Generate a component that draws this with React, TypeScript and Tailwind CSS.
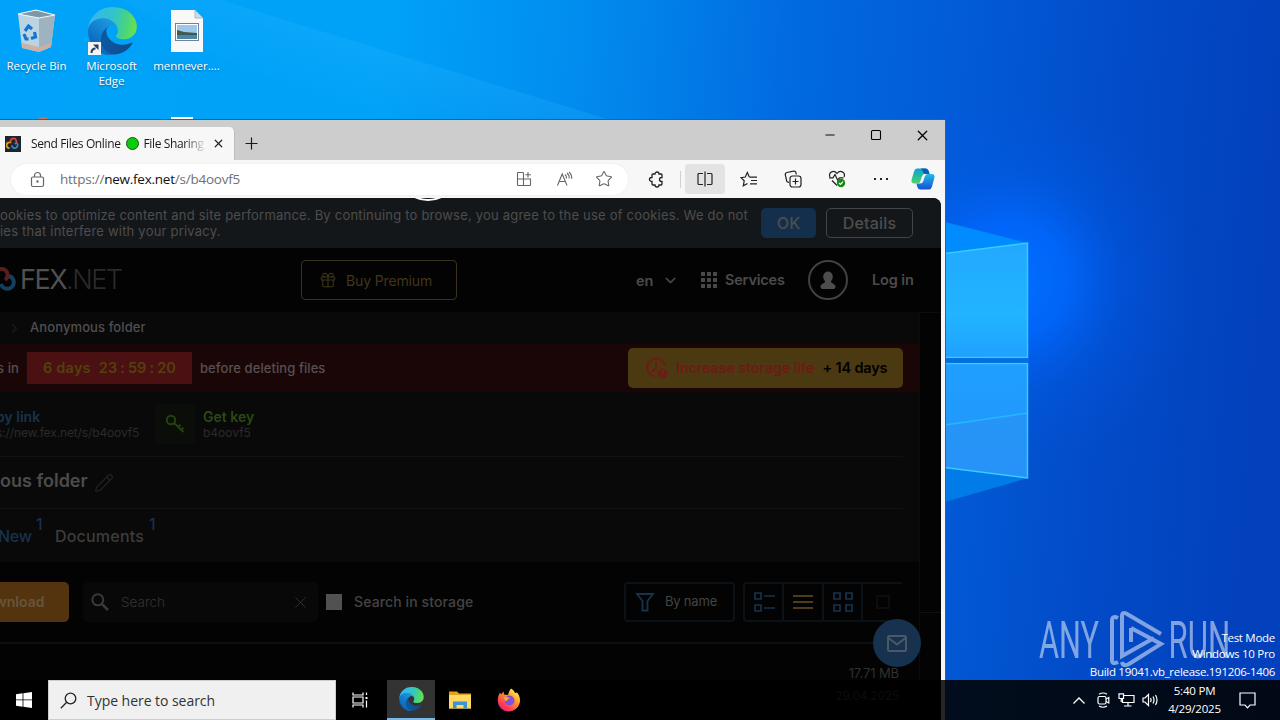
import { ReactNode } from 'react';
import {
  ChevronDown,
  ChevronRight,
  Gift,
  Minus,
  Pencil,
  Plus,
  Square,
  Star,
  X,
} from 'lucide-react';

function EdgeLogo({ id, className }: { id: string; className: string }) {
  return (
    <svg viewBox="0 0 262 256" className={className}>
      <defs>
        <linearGradient id={`${id}-a`} x1="60" y1="177" x2="241" y2="177" gradientUnits="userSpaceOnUse">
          <stop offset="0" stopColor="#0c59a4" />
          <stop offset="1" stopColor="#114a8b" />
        </linearGradient>
        <linearGradient id={`${id}-b`} x1="157" y1="90" x2="46" y2="222" gradientUnits="userSpaceOnUse">
          <stop offset="0" stopColor="#1b9de2" />
          <stop offset="0.5" stopColor="#1482d0" />
          <stop offset="1" stopColor="#0b66b8" />
        </linearGradient>
        <linearGradient id={`${id}-c`} x1="10" y1="70" x2="250" y2="120" gradientUnits="userSpaceOnUse">
          <stop offset="0" stopColor="#35b8f0" />
          <stop offset="0.5" stopColor="#32c4c8" />
          <stop offset="0.8" stopColor="#4bd47c" />
          <stop offset="1" stopColor="#66e050" />
        </linearGradient>
      </defs>
      <path
        fill={`url(#${id}-a)`}
        d="M231.07 190.54c-3.39 1.77-6.88 3.34-10.46 4.7a101.02 101.02 0 0 1-35.44 6.33c-46.69 0-87.36-32.11-87.36-73.32a31.02 31.02 0 0 1 16.19-26.83c-42.25 1.78-53.1 45.8-53.1 71.58 0 72.92 67.22 80.31 81.7 80.31 7.82 0 19.6-2.27 26.7-4.51l1.29-.43a128.33 128.33 0 0 0 66.63-52.8 4 4 0 0 0-6.15-5.03z"
      />
      <path
        fill={`url(#${id}-b)`}
        d="M105.73 241.42a79.22 79.22 0 0 1-22.74-21.34 80.72 80.72 0 0 1 31.01-118.65c3.3-1.55 8.93-4.36 16.43-4.22a34.1 34.1 0 0 1 27.07 13.72 33.66 33.66 0 0 1 6.64 19.45c0-.21 25.9-84.21-84.65-84.21C33.06 46.17.02 90.14.02 128.8a130.5 130.5 0 0 0 12.1 56 128 128 0 0 0 156.43 67.05 75.5 75.5 0 0 1-62.77-10.4z"
      />
      <path
        fill={`url(#${id}-c)`}
        d="M152.33 148.86c-.85 1.1-3.5 2.62-3.5 5.95 0 2.74 1.79 5.38 4.96 7.6 15.1 10.51 43.57 9.12 43.65 9.12a62.6 62.6 0 0 0 31.85-8.79A64.55 64.55 0 0 0 261.2 107c.2-23.46-8.38-39.06-11.84-45.9C227.4 18.14 180 0 128.05 0A128 128 0 0 0 .02 126.2c.5-36.54 36.8-66.05 80-66.05 3.5 0 23.46.34 42 10.07 16.34 8.58 24.9 18.94 30.85 29.21 6.18 10.67 7.28 24.15 7.28 29.52 0 5.37-2.74 13.33-7.8 19.91z"
      />
    </svg>
  );
}

function Wallpaper() {
  return (
    <svg viewBox="0 0 1280 720" className="absolute inset-0 h-full w-full">
      <defs>
        <linearGradient id="sky" x1="0" y1="0" x2="1280" y2="100" gradientUnits="userSpaceOnUse">
          <stop offset="0" stopColor="#00a3f9" />
          <stop offset="0.3" stopColor="#00a2f8" />
          <stop offset="0.46" stopColor="#018bee" />
          <stop offset="0.62" stopColor="#016ae0" />
          <stop offset="0.76" stopColor="#025ad6" />
          <stop offset="0.88" stopColor="#024bc8" />
          <stop offset="1" stopColor="#0340bc" />
        </linearGradient>
        <linearGradient id="ray" x1="330" y1="0" x2="300" y2="90" gradientUnits="userSpaceOnUse">
          <stop offset="0" stopColor="#30b8ff" stopOpacity="0.300" />
          <stop offset="1" stopColor="#30b8ff" stopOpacity="0" />
        </linearGradient>
        <radialGradient id="glow" cx="1010" cy="280" r="190" gradientUnits="userSpaceOnUse">
          <stop offset="0" stopColor="#0070ff" />
          <stop offset="0.3" stopColor="#0068ff" stopOpacity="0.85" />
          <stop offset="0.6" stopColor="#005cea" stopOpacity="0.35" />
          <stop offset="1" stopColor="#0055e0" stopOpacity="0" />
        </radialGradient>
        <linearGradient id="pane" x1="945" y1="245" x2="945" y2="478" gradientUnits="userSpaceOnUse">
          <stop offset="0" stopColor="#22a9ff" />
          <stop offset="0.3" stopColor="#21b4ff" />
          <stop offset="0.5" stopColor="#1f9fff" />
          <stop offset="1" stopColor="#2394fa" />
        </linearGradient>
      </defs>
      <rect width="1280" height="720" fill="url(#sky)" />
      <path d="M220 0 L610 120 H330 L120 0Z" fill="url(#ray)" />
      <rect x="700" width="580" height="720" fill="url(#glow)" />
      <path d="M945 222 L1028 243 L945 254Z" fill="#008cff" />
      <path d="M945 467 L1028 478 L945 502Z" fill="#007be8" />
      <path d="M945 253 L1028 243 V357 H945Z" fill="url(#pane)" />
      <path d="M945 363 H1028 V478 L945 467Z" fill="url(#pane)" />
      <path d="M945 425 L1028 413 V478 L945 467Z" fill="#2a92f5" opacity="0.7" />
      <path d="M945 425 L1028 413" stroke="#24b8ff" strokeWidth="1.5" />
      <path d="M945 357.500 H1027.500 V243 L945 253.500" fill="none" stroke="#38cbff" strokeWidth="1.5" />
      <path d="M945 363.500 H1027.500 V478 L945 467.500" fill="none" stroke="#38cbff" strokeWidth="1.5" />
      <rect x="945" y="358.500" width="84" height="4" fill="#0070df" />
    </svg>
  );
}

function DesktopIcon({ children, label }: { children: ReactNode; label: string[] }) {
  return (
    <div className="flex w-[75px] flex-col items-center">
      <div className="flex h-[50px] w-[50px] items-center justify-center">{children}</div>
      <div className="mt-[2px] text-center font-['Open_Sans',sans-serif] text-[11.5px] leading-[15px] whitespace-nowrap text-white [text-shadow:0_1px_2px_rgba(0,0,0,0.4)]">
        {label.map((line) => (
          <div key={line}>{line}</div>
        ))}
      </div>
    </div>
  );
}

function DesktopIcons() {
  return (
    <div className="relative -ml-px flex pt-[6px]">
      <DesktopIcon label={['Recycle Bin']}>
        <svg width="50" height="50" viewBox="0 0 50 50">
          <path d="M6 8 L24 4 L43 9 L39 41 L27 46 L10 42Z" fill="#cfd9df" opacity="0.9" />
          <path d="M27 11 L43 9 L39 41 L27 46Z" fill="#9fb2bf" />
          <path d="M6 8 L24 4 L43 9 L27 12Z" fill="#7d97a6" stroke="#eef5f8" strokeWidth="1.200" />
          <path d="M10 37 L27 41 L39 37 L38.500 41 L27 46 L10.500 42Z" fill="#c9b1a4" />
          <g fill="none" stroke="#1475cf" strokeWidth="3.200">
            <path d="M13 25 L16.500 20 L20 23" />
            <path d="M22.500 26 L23.500 31 L19 32.500" />
            <path d="M12 28 L14 33 L16.500 33" />
          </g>
        </svg>
      </DesktopIcon>
      <DesktopIcon label={['Microsoft', 'Edge']}>
        <div className="relative left-px">
          <EdgeLogo id="desk" className="h-[48px] w-[49px]" />
          <svg className="absolute bottom-0 left-0" width="13" height="13" viewBox="0 0 13 13">
            <rect width="13" height="13" fill="#f4f4f4" />
            <path d="M3.500 11 C3.500 8 5 6.500 7.500 6.500" fill="none" stroke="#1d3c6c" strokeWidth="2" />
            <path d="M5 2.500 H10.500 V8Z" fill="#1d3c6c" />
          </svg>
        </div>
      </DesktopIcon>
      <DesktopIcon label={['mennever....']}>
        <svg width="50" height="50" viewBox="0 0 50 50">
          <path d="M9 4 H33 L41 12 V46 H9Z" fill="#f8f8f8" />
          <path d="M33 4 V12 H41Z" fill="#cfdce4" stroke="#9ab0bd" strokeWidth="0.800" />
          <rect x="13.500" y="17.500" width="23" height="17" fill="#fff" stroke="#6f8493" />
          <rect x="15" y="19" width="20" height="14" fill="#9cc8ec" />
          <path d="M15 24 L22 26 L35 27 V29 H15Z" fill="#3f5b50" />
          <path d="M15 29 H35 V33 H15Z" fill="#4b86a8" />
        </svg>
      </DesktopIcon>
    </div>
  );
}

function FexMark({ size }: { size: number }) {
  return (
    <svg width={size} height={size} viewBox="0 0 24 24" fill="none" strokeWidth="3">
      <path d="M6 19 A5 5 0 0 1 6 9 H9" stroke="#e0a020" />
      <path d="M8 9 A5 5 0 1 1 15 12" stroke="#d9453c" />
      <path d="M10 14 A5 5 0 1 0 18 10" stroke="#2a8fd8" />
    </svg>
  );
}

function TitleBar() {
  return (
    <div className="flex h-[40px] items-end bg-[#cdcdcd]">
      <div className="flex h-[33px] w-[235px] items-center rounded-tr-[5px] border-r border-[#bdbdbd] bg-[#f7f7f7] pl-[5px]">
        <div className="flex h-4 w-4 items-center justify-center bg-[#20242c]">
          <FexMark size={14} />
        </div>
        <div className="ml-[10px] flex w-[174px] items-center overflow-hidden font-['Open_Sans',sans-serif] text-[12px] tracking-[-0.370px] whitespace-nowrap text-[#1a1a1a] [mask-image:linear-gradient(to_right,black_88%,transparent_101%)]">
          <span>Send Files Online</span>
          <span className="mx-[5px] h-[13px] w-[13px] shrink-0 rounded-full border border-[#0b5a0b] bg-[#0dcb0d]" />
          <span>File Sharing</span>
        </div>
        <X className="ml-[7px] text-[#222]" size={13} strokeWidth={2.200} />
      </div>
      <Plus className="mb-[7px] ml-[7px] text-[#1a1a1a]" size={19} strokeWidth={1.500} />
      <div className="mb-[16px] ml-auto flex">
        <div className="flex w-[46px] justify-center">
          <Minus size={16} strokeWidth={1.500} className="scale-x-90" />
        </div>
        <div className="flex w-[46px] justify-center pt-[2px]">
          <Square size={12} strokeWidth={2.200} />
        </div>
        <div className="flex w-[46px] justify-center">
          <X size={17} strokeWidth={1.700} />
        </div>
      </div>
    </div>
  );
}

function ToolButton({ children, active = false }: { children: ReactNode; active?: boolean }) {
  return (
    <div className="flex w-[44px] justify-center">
      <div className={active ? 'flex h-[30px] w-[40px] items-center justify-center rounded-[4px] bg-[#e3e3e3]' : 'flex h-[30px] w-[40px] items-center justify-center'}>
        {children}
      </div>
    </div>
  );
}

function AddressBar() {
  return (
    <div className="flex h-[38px] items-center bg-[#f7f7f7] pl-[11px]">
      <div className="flex h-[31px] w-[617px] items-center rounded-full bg-white pl-[19px] shadow-[0_0_2px_rgba(0,0,0,0.08)]">
        <svg width="15" height="17" viewBox="0 0 15 17" fill="none" stroke="#666" strokeWidth="1.200">
          <rect x="1.500" y="6" width="12" height="9.500" rx="1.500" />
          <path d="M4.500 6 V4.500 A3 3 0 0 1 10.500 4.500 V6" />
          <circle cx="7.500" cy="10.500" r="0.600" fill="#666" />
        </svg>
        <div className="ml-[15px] w-[448px] font-['Open_Sans',sans-serif] text-[13.500px] tracking-[-0.240px] text-[#707070]">
          https://<span className="text-[#111]">new.fex.net</span>/s/b4oovf5
        </div>
        <div className="flex items-center">
          <div className="flex w-[40px] justify-center pr-[8px]">
            <svg width="16" height="16" viewBox="0 0 16 16" fill="none" stroke="#666" strokeWidth="1.100">
              <path d="M7.500 1.500 H2 A0.500 0.500 0 0 0 1.500 2 V14 A0.500 0.500 0 0 0 2 14.500 H14 A0.500 0.500 0 0 0 14.500 14 V8 H1.500 M7.500 1.500 V14.500 M12 1 V6.500 M9.300 3.700 H14.800" />
            </svg>
          </div>
          <div className="flex w-[40px] justify-center pr-[8px]">
            <svg width="17" height="16" viewBox="0 0 17 16" fill="none" stroke="#666" strokeWidth="1.100">
              <path d="M1.500 14.500 L6.200 3 L11 14.500 M3.200 10.500 H9.300" />
              <path d="M9 3.500 Q10.800 5 10.500 7.500 M11 2 Q13.500 4 13.200 7.500 M13 1 Q16 3.500 15.700 7.800" />
            </svg>
          </div>
          <div className="flex w-[40px] justify-center pr-[8px]">
            <Star size={18} strokeWidth={1.400} color="#666" />
          </div>
        </div>
      </div>
      <div className="ml-[6px] flex items-center text-[#222]">
        <ToolButton>
          <svg width="17" height="17" viewBox="0 0 17 17" fill="none" stroke="#222" strokeWidth="1.300">
            <path d="M5 3 H7 A2 2 0 0 1 11 3 H13 A1 1 0 0 1 14 4 V6.500 H13.500 A2 2 0 0 0 13.500 10.500 H14 V13 A1 1 0 0 1 13 14 H11 A2 2 0 0 1 7 14 H5 A1 1 0 0 1 4 13 V10.500 H3.500 A2 2 0 0 1 3.500 6.500 H4 V4 A1 1 0 0 1 5 3Z" />
          </svg>
        </ToolButton>
        <div className="ml-[2px] h-[17px] w-px bg-[#d0d0d0]" />
        <div className="ml-[2px] flex items-center">
          <ToolButton active>
            <svg width="16" height="16" viewBox="0 0 16 16" fill="none" stroke="#222" strokeWidth="1.200">
              <path d="M6 2.500 H2 A1 1 0 0 0 1 3.500 V12.500 A1 1 0 0 0 2 13.500 H6 M10 2.500 H14 A1 1 0 0 1 15 3.500 V12.500 A1 1 0 0 1 14 13.500 H10 M8 0.500 V15.500" />
            </svg>
          </ToolButton>
          <ToolButton>
            <svg width="18" height="17" viewBox="0 0 18 17" fill="none" stroke="#222" strokeWidth="1.200">
              <path d="M10 6 H9.300 L7.300 1.500 L5.300 6 L1 6.600 L4.200 9.800 L3.300 14.800 L7.500 12.500" />
              <path d="M10 6.200 H17 M11 9.500 H17 M10 12.800 H17" />
            </svg>
          </ToolButton>
          <ToolButton>
            <svg width="18" height="18" viewBox="0 0 18 18" fill="none" stroke="#222" strokeWidth="1.200">
              <rect x="6" y="6" width="11" height="11" rx="2.500" />
              <path d="M11.500 8.500 V14.500 M8.500 11.500 H14.500" />
              <path d="M5 12.500 L4 12.200 A2 2 0 0 1 2.500 10 L1.300 5 A2.200 2.200 0 0 1 3 2.500 L9.500 1.200 A2 2 0 0 1 12 3 L12.300 4.500" />
            </svg>
          </ToolButton>
          <ToolButton>
            <svg width="18" height="18" viewBox="0 0 18 18" fill="none" stroke="#222" strokeWidth="1.200">
              <path d="M2 7 C0 2 6 -0.500 9 3.500 C12 -0.500 18 2 16 7 M4 10.500 L9 15.500" />
              <path d="M1 7.800 H5 L7 4.500 L9.500 10 L11.500 7.800 H15.500" />
              <circle cx="13" cy="13" r="4.200" fill="#138a13" stroke="none" />
              <path d="M11 13 L12.500 14.500 L15 11.700" stroke="#fff" />
            </svg>
          </ToolButton>
          <ToolButton>
            <div className="flex gap-[4px]">
              <div className="h-[2px] w-[2px] bg-[#222]" />
              <div className="h-[2px] w-[2px] bg-[#222]" />
              <div className="h-[2px] w-[2px] bg-[#222]" />
            </div>
          </ToolButton>
          <svg className="ml-[8px]" width="24" height="24" viewBox="0 0 24 24">
            <defs>
              <linearGradient id="cp1" x1="0" y1="0" x2="0" y2="1">
                <stop offset="0" stopColor="#139fd7" />
                <stop offset="0.5" stopColor="#21bd9b" />
                <stop offset="1" stopColor="#59cf6e" />
              </linearGradient>
              <linearGradient id="cp2" x1="0" y1="0" x2="0" y2="1">
                <stop offset="0" stopColor="#1dc0e4" />
                <stop offset="0.6" stopColor="#1d78de" />
                <stop offset="1" stopColor="#1553cf" />
              </linearGradient>
            </defs>
            <path d="M6 1.500 H14.500 Q17 1.500 18 5 L18.500 7 H13.500 Q11.500 7 10.800 9.500 L9.500 14 Q8.800 16.500 6.500 16.500 H3 Q-0.500 16.500 0.800 12 L3 4.500 Q3.800 1.500 6 1.500Z" fill="url(#cp1)" />
            <path d="M18 22.500 H9.500 Q7 22.500 6 19 L5.500 16.500 H9 Q11.500 16.500 12.300 14 L14 9 Q14.800 7 17 7 H21 Q24.500 7 23.200 11.500 L21 19.500 Q20.200 22.500 18 22.500Z" fill="url(#cp2)" />
            <path d="M10 1.500 H14.500 Q17 1.500 18 5 L18.500 7 H13.500 Q12 5 10 1.500Z" fill="#1458b8" />
          </svg>
        </div>
      </div>
    </div>
  );
}

function CookieBanner() {
  return (
    <div className="flex h-[50px] items-center bg-[#14171a] text-[#4d4d4d]">
      <div className="w-[761px] text-[13px] leading-4 tracking-[0.210px] whitespace-nowrap">
        <div>ookies to optimize content and site performance. By continuing to browse, you agree to the use of cookies. We do not</div>
        <div>ies that interfere with your privacy.</div>
      </div>
      <div className="flex h-[30px] w-[55px] items-center justify-center rounded-[5px] bg-[#142f4b] text-base font-medium">OK</div>
      <div className="ml-[10px] flex h-[30px] w-[87px] items-center justify-center rounded-[5px] border border-[#444] text-base font-medium tracking-[0.200px]">
        Details
      </div>
    </div>
  );
}

function SiteHeader() {
  return (
    <div className="flex h-[64px] items-center bg-[#030303] text-[14.500px] font-semibold text-[#4b4b4b]">
      <div className="-ml-[10px]">
        <svg width="27" height="28" viewBox="0 0 27 28" fill="none" strokeWidth="4">
          <path d="M8 4 A6 6 0 1 1 15 14" stroke="#581e1c" />
          <path d="M11 18 A6.500 6.500 0 1 0 19 10" stroke="#143f5e" />
        </svg>
      </div>
      <div className="ml-[3px] w-[281px] text-[27px] tracking-[-1.500px]">
        <span className="font-normal text-[#505050]">FEX</span>
        <span className="font-light text-[#2a2a2a]">.NET</span>
      </div>
      <div className="flex h-[40px] w-[156px] items-center rounded-[4px] border border-[#3a331c] pl-[17px] text-[14px] font-normal tracking-[-0.130px] text-[#41361a]">
        <Gift size={18} strokeWidth={1.400} />
        <span className="ml-[9px]">Buy Premium</span>
      </div>
      <div className="ml-[179px] w-[26px] pt-[1px]">en</div>
      <ChevronDown size={17} strokeWidth={2.400} className="text-[#444]" />
      <div className="ml-[22px] grid grid-cols-3 gap-[2px]">
        {[0, 1, 2, 3, 4, 5, 6, 7, 8].map((n) => (
          <div key={n} className="h-[4px] w-[4px] bg-[#484848]" />
        ))}
      </div>
      <div className="ml-[8px] w-[83px] tracking-[-0.200px]">Services</div>
      <svg width="40" height="40" viewBox="0 0 40 40" className="-mt-px">
        <circle cx="20" cy="20" r="19" fill="none" stroke="#414141" strokeWidth="2" />
        <path d="M20 11.500 a4.800 5 0 0 1 4.800 5 c0 2.500 -1 3.500 -2 5 c0.500 2 4.500 2 4.700 5 c0 2 -1 2.500 -2.500 2.500 h-10 c-1.500 0 -2.500 -0.500 -2.500 -2.500 c0.200 -3 4.200 -3 4.700 -5 c-1 -1.500 -2 -2.500 -2 -5 a4.800 5 0 0 1 4.800 -5Z" fill="#4d4d4d" />
      </svg>
      <div className="ml-[24px] tracking-[-0.100px]">Log in</div>
    </div>
  );
}

function FolderPanel() {
  return (
    <div className="h-[250px] bg-[#090909]">
      <div className="flex h-[32px] items-center pl-[7px] text-[13px] font-medium tracking-[0.100px] text-[#4f4f4f]">
        <ChevronRight size={15} className="text-[#1c1c1c]" />
        <span className="ml-[8px]">Anonymous folder</span>
      </div>
      <div className="flex h-[48px] items-center bg-[#1b0607] pt-px text-[13px] font-medium tracking-[0.080px] text-[#565050]">
        <div className="w-[27px]">
          <span className="-ml-[3px]">s in</span>
        </div>
        <div className="mb-px flex h-[32px] w-[165px] items-center justify-center bg-[#4a1012] text-[14.500px] font-semibold text-[#54400c]">
          <span className="tracking-[0.200px]">6 days</span>
          <span className="ml-[8px]">23</span>
          <span className="mx-[3px]">:</span>
          <span>59</span>
          <span className="mx-[3px]">:</span>
          <span>20</span>
        </div>
        <div className="ml-[8px] w-[428px]">before deleting files</div>
        <div className="mb-px flex h-[40px] w-[275px] items-center rounded-[5px] bg-[#4b3912] pl-[17px] text-[14.500px] font-semibold tracking-[-0.190px]">
          <svg width="24" height="24" viewBox="0 0 24 24" fill="none" stroke="#6f1a14" strokeWidth="2">
            <path d="M10 20.500 A9 9 0 1 1 20 10 M11 5.500 V12 L7.500 15.500" />
            <circle cx="17.500" cy="17.500" r="5" fill="#6f1a14" stroke="none" />
            <path d="M17.500 14.500 V18 M17.500 19.500 V20.500" stroke="#4b3912" />
          </svg>
          <span className="ml-[7px] text-[#6f1a14]">Increase storage life</span>
          <span className="ml-[8px] text-black">+ 14 days</span>
        </div>
      </div>
      <div className="mr-[16px] flex h-[65px] items-center border-b border-[#111]">
        <div className="-ml-[4px] w-[159px] whitespace-nowrap">
          <div className="text-[14px] leading-[16px] font-semibold text-[#17324d]">py link</div>
          <div className="text-[12px] leading-[15px] tracking-[-0.130px] text-[#2b2b2b]">s://new.fex.net/s/b4oovf5</div>
        </div>
        <div className="flex h-[40px] w-[40px] items-center justify-center rounded bg-[#0b0d08]">
          <svg width="20" height="20" viewBox="0 0 20 20" fill="none" stroke="#25420d" strokeWidth="2">
            <circle cx="6" cy="6" r="4.200" />
            <path d="M9 9 L18.500 18 M13 13 L15.500 10.800 M16 16 L18.500 13.800" />
          </svg>
        </div>
        <div className="ml-[8px]">
          <div className="text-[14px] leading-[16px] font-semibold text-[#2a4a10]">Get key</div>
          <div className="text-[12px] leading-[15px] text-[#2b2b2b]">b4oovf5</div>
        </div>
      </div>
      <div className="mr-[16px] flex h-[52px] items-center border-b border-[#111] text-[18px] font-semibold text-[#4c4c4c]">
        <span className="mb-[4px] w-[94px]">ous folder</span>
        <Pencil size={20} strokeWidth={1.300} className="text-[#252525]" />
      </div>
      <div className="flex h-[53px] items-center text-base font-medium">
        <div className="-ml-[2px] w-[38px] tracking-[-0.300px] text-[#17324d]">New</div>
        <div className="mb-[24px] w-[19px] text-[#17324d]">1</div>
        <div className="w-[94px] tracking-[0.200px] text-[#3d3d3d]">Documents</div>
        <div className="mb-[24px] text-[#17324d]">1</div>
      </div>
    </div>
  );
}

function FileToolbar() {
  return (
    <div className="mr-[17px] flex h-[82px] items-center border-b-2 border-[#0f0f0f] text-[#444]">
      <div className="flex h-[40px] w-[69px] items-center rounded-r-[5px] bg-[#53340f] pb-px text-[14px] font-semibold text-[#66553c]">
        <span className="-ml-[5px]">wnload</span>
      </div>
      <div className="ml-[14px] flex h-[40px] w-[235px] items-center rounded-[5px] bg-[#080808] pl-[8px]">
        <svg width="18" height="18" viewBox="0 0 18 18" fill="none" stroke="#3a3a3a" strokeWidth="2">
          <circle cx="6.800" cy="6.800" r="5.500" />
          <path d="M10.800 10.800 L17 17" strokeWidth="2.500" />
        </svg>
        <span className="ml-[12px] w-[170px] text-[13.500px] font-light text-[#343434]">Search</span>
        <X size={19} strokeWidth={1.200} className="text-[#303030]" />
      </div>
      <div className="ml-[8px] h-4 w-4 bg-[#515151]" />
      <div className="ml-[12px] w-[270px] pb-px text-[14px] font-medium tracking-[0.120px] whitespace-nowrap">Search in storage</div>
      <div className="flex h-[40px] w-[111px] items-center rounded-[4px] border-2 border-[#0a1218] pl-[9px]">
        <svg width="20" height="20" viewBox="0 0 20 20" fill="none" stroke="#17334d" strokeWidth="1.800">
          <path d="M2 2 H18 L12.500 9 V18.500 H7.500 V9Z" />
        </svg>
        <span className="ml-[10px] text-[13px] tracking-[-0.200px]">By name</span>
      </div>
      <div className="ml-[8px] flex h-[40px] flex-1 items-center rounded-l-[4px] border-y-2 border-l-2 border-[#0a1218]">
        <div className="flex h-full w-[39px] items-center justify-center border-r-2 border-[#0a1218]">
          <svg width="22" height="22" viewBox="0 0 22 22" fill="none" stroke="#17334d" strokeWidth="1.700">
            <path d="M2 2 H8 V8 H2Z M2 14 H8 V20 H2Z M11 5 H22 M11 17 H22" />
          </svg>
        </div>
        <div className="flex h-full w-[40px] flex-col items-center justify-center gap-[4px] border-r-2 border-[#0a1218]">
          <div className="h-[2px] w-[20px] bg-[#4d3b19]" />
          <div className="h-[2px] w-[20px] bg-[#4d3b19]" />
          <div className="h-[2px] w-[20px] bg-[#4d3b19]" />
        </div>
        <div className="flex h-full w-[39px] items-center justify-center border-r-2 border-[#0a1218]">
          <svg width="22" height="22" viewBox="0 0 22 22" fill="none" stroke="#17334d" strokeWidth="1.700">
            <path d="M2 2 H8 V8 H2Z M14 2 H20 V8 H14Z M2 14 H8 V20 H2Z M14 14 H20 V20 H14Z" />
          </svg>
        </div>
        <div className="ml-[13px] h-[14px] w-[14px] border-2 border-[#0d0d0d]" />
      </div>
    </div>
  );
}

function BrowserWindow() {
  return (
    <div className="absolute top-[119px] left-0 h-[561px] w-[946px] overflow-hidden border-t border-r border-[#1568ad] bg-[#f7f7f7] text-black">
      <TitleBar />
      <AddressBar />
      <div className="relative h-[482px] w-[941px] overflow-hidden rounded-tr-[8px] bg-[#030303] font-['Inter',sans-serif]">
        <CookieBanner />
        <SiteHeader />
        <div className="flex">
          <div className="h-[370px] w-[919px]">
            <FolderPanel />
            <FileToolbar />
            <div className="mt-[21px] mr-[20px] text-right text-[13px] leading-4 tracking-[-0.100px] text-[#303030]">17.71 MB</div>
          </div>
          <div className="h-[370px] w-[22px] border-t border-l border-[#0c0c0c]">
            <div className="h-[300px] border-b border-[#101010]" />
          </div>
        </div>
        <svg className="absolute top-0 left-[403px]" width="50" height="4" viewBox="0 0 50 4">
          <circle cx="25" cy="-28" r="30" fill="#111" stroke="#fff" strokeWidth="2" />
        </svg>
        <div className="absolute top-[421px] left-[873px] flex h-[48px] w-[48px] items-center justify-center rounded-full bg-[#16324f]">
          <svg width="20" height="17" viewBox="0 0 20 17" fill="none" stroke="#4b5967" strokeWidth="2">
            <rect x="1" y="1" width="18" height="15" rx="1.500" />
            <path d="M1.500 3 L10 9.500 L18.500 3" />
          </svg>
        </div>
      </div>
    </div>
  );
}

function Watermark() {
  return (
    <>
      <div className="absolute top-[610px] left-[1039px] flex items-center text-white/50">
        <span className="w-[66px] origin-left scale-x-[0.590] font-['Roboto',sans-serif] text-[52px] leading-[62px] font-normal">ANY</span>
        <svg width="60" height="62" viewBox="0 0 60 62" fill="none" stroke="currentColor" strokeWidth="4">
          <path d="M13 8 Q7 5 7 11 V50 Q7 55 13 52" />
          <path d="M17 6 Q17 1 22 4 L56 24 M17 6 V46 L49 28 M26 18 V32 M26 18 L56 34 L24 54 Q18 57 17 52" />
        </svg>
        <span className="origin-left scale-x-[0.600] pl-[6px] font-['Roboto',sans-serif] text-[52px] leading-[62px] font-normal">RUN</span>
      </div>
      <div className="absolute top-[629px] right-[5px] text-right font-['Open_Sans',sans-serif] text-[11.500px] leading-[17px] tracking-[-0.280px] whitespace-nowrap text-white">
        <div>Test Mode</div>
        <div className="-mt-px mb-px">Windows 10 Pro</div>
        <div className="tracking-[-0.300px]">Build 19041.vb_release.191206-1406</div>
      </div>
    </>
  );
}

function Taskbar() {
  return (
    <div className="absolute bottom-0 left-0 flex h-[40px] w-full items-center bg-[linear-gradient(to_right,#000_0,#000_941px,#252525_941px,#252525_945px,#010d1d_945px,#020916_100%)] font-['Open_Sans',sans-serif]">
      <div className="flex w-[48px] justify-center">
        <svg width="16" height="16" viewBox="0 0 16 16" fill="#fff">
          <path d="M0 2.200 L6.600 1.300 V7.500 H0Z M7.400 1.200 L16 0 V7.500 H7.400Z M0 8.300 H6.600 V14.700 L0 13.800Z M7.400 8.300 H16 V16 L7.400 14.800Z" />
        </svg>
      </div>
      <div className="flex h-[40px] w-[288px] items-center border border-[#ccc] bg-[#f0f0f0] pl-[11px] text-[#333]">
        <svg width="17" height="17" viewBox="0 0 17 17" fill="none" stroke="#222" strokeWidth="1.300">
          <circle cx="10.500" cy="6.500" r="5.300" />
          <path d="M6.700 10.300 L0.800 16.200" />
        </svg>
        <span className="ml-[10px] text-[14px] tracking-[-0.040px]">Type here to search</span>
      </div>
      <div className="flex w-[51px] justify-center pr-[3px]">
        <svg width="16" height="16" viewBox="0 0 16 16" fill="none" stroke="#fff" strokeWidth="1.200">
          <path d="M1 0.500 V3 H11 V0.500 M1 15.500 V13 H11 V15.500 M1 5 H11 V11 H1Z M14.500 0.500 V3 M14.500 8.500 V15.500" />
          <rect x="13.500" y="5" width="2" height="2" fill="#fff" stroke="none" />
        </svg>
      </div>
      <div className="flex h-[40px] w-[48px] items-center justify-center border-b-2 border-[#76b9ed] bg-[#333]">
        <EdgeLogo id="task" className="h-[24px] w-[25px]" />
      </div>
      <div className="flex w-[49px] justify-center">
        <svg width="22" height="18" viewBox="0 0 22 18">
          <path d="M0 0.500 H8 L10 2.500 H22 V17.500 H0Z" fill="#e3a419" />
          <path d="M0 4 H22 V17.500 H0Z" fill="#ffd765" />
          <path d="M4 17.500 V10.500 H18 V17.500 H14.500 V14 H7.500 V17.500Z" fill="#3d92cf" />
        </svg>
      </div>
      <div className="flex w-[49px] justify-center">
        <svg width="24" height="24" viewBox="0 0 24 24">
          <defs>
            <linearGradient id="fox" x1="20" y1="2" x2="5" y2="22" gradientUnits="userSpaceOnUse">
              <stop offset="0" stopColor="#fff04a" />
              <stop offset="0.4" stopColor="#ff9a2a" />
              <stop offset="0.8" stopColor="#ff3a55" />
              <stop offset="1" stopColor="#e6237c" />
            </linearGradient>
          </defs>
          <path d="M14 0.500 C16 2 17.500 3 18 5 L20 4.500 C22.500 7.500 23.500 11 22.800 14.500 C21.500 20 17 23.500 12 23.500 C5.500 23.500 0.800 18.500 0.800 12.500 C0.800 9 2 6 3 4.500 L4 6.500 L6.500 3.500 L7 6.500 L11 7 C11.500 4.500 12.500 2.500 14 0.500Z" fill="url(#fox)" />
          <circle cx="12.500" cy="12.500" r="5" fill="#8052dd" />
          <path d="M7 9.500 Q10 8 13 10.500 Q9.500 11 10 13 Q7.500 13.500 7 9.500Z" fill="#ffab35" />
        </svg>
      </div>
      <div className="w-[366px] pb-[8px] text-right font-['Inter',sans-serif] text-[12px] tracking-[-0.200px] text-[#0c0c0c]">29.04.2025</div>
      <div className="ml-auto flex items-center text-white">
        <svg width="12" height="7" viewBox="0 0 12 7" fill="none" stroke="#fff" strokeWidth="1.300">
          <path d="M0.500 6.500 L6 1 L11.500 6.500" />
        </svg>
        <svg className="ml-[12px]" width="13" height="16" viewBox="0 0 13 16" fill="none" stroke="#fff" strokeWidth="1.200">
          <rect x="1" y="4.500" width="8" height="7.500" rx="1.500" />
          <path d="M9 7 L11.800 5.500 V11 L9 9.500 M2 2.300 Q6 -0.300 10 2.300 M2 14 Q6 16.500 10 14" />
        </svg>
        <svg className="ml-[8px]" width="17" height="14" viewBox="0 0 17 14" fill="none" stroke="#fff" strokeWidth="1.200">
          <path d="M6 2.500 H16 V9.500 H4.500 V6 M10 9.500 V13 M6 13 H13.500 M1 0.800 H5.500 V5.500 H1Z M3.200 5.500 V9" />
        </svg>
        <svg className="ml-[7px]" width="17" height="14" viewBox="0 0 17 14" fill="none" stroke="#fff" strokeWidth="1.200">
          <path d="M1 5 H3 L6.500 1.500 V12.500 L3 9 H1Z M8.500 5 Q9.700 7 8.500 9 M11 3.500 Q13 7 11 10.500 M13.500 2 Q16.500 7 13.500 12" />
        </svg>
        <div className="w-[71px] text-center text-[11.500px] leading-[18px] tracking-[-0.200px]">
          <div>5:40 PM</div>
          <div>4/29/2025</div>
        </div>
        <svg className="mr-[24px] ml-[9px]" width="17" height="17" viewBox="0 0 17 17" fill="none" stroke="#fff" strokeWidth="1.200">
          <path d="M1 1 H16 V13 H11 L8.500 15.800 L6 13 H1Z" />
        </svg>
      </div>
    </div>
  );
}

export default function App() {
  return (
    <div className="relative h-[720px] w-[1280px] overflow-hidden bg-[#0246c4]">
      <Wallpaper />
      <DesktopIcons />
      <div className="absolute top-[117px] left-[35px] h-[8px] w-[16px] rounded-t-full bg-[#c8735b]" />
      <div className="absolute top-[117px] left-[171px] h-[3px] w-[22px] bg-white" />
      <BrowserWindow />
      <Watermark />
      <Taskbar />
    </div>
  );
}
